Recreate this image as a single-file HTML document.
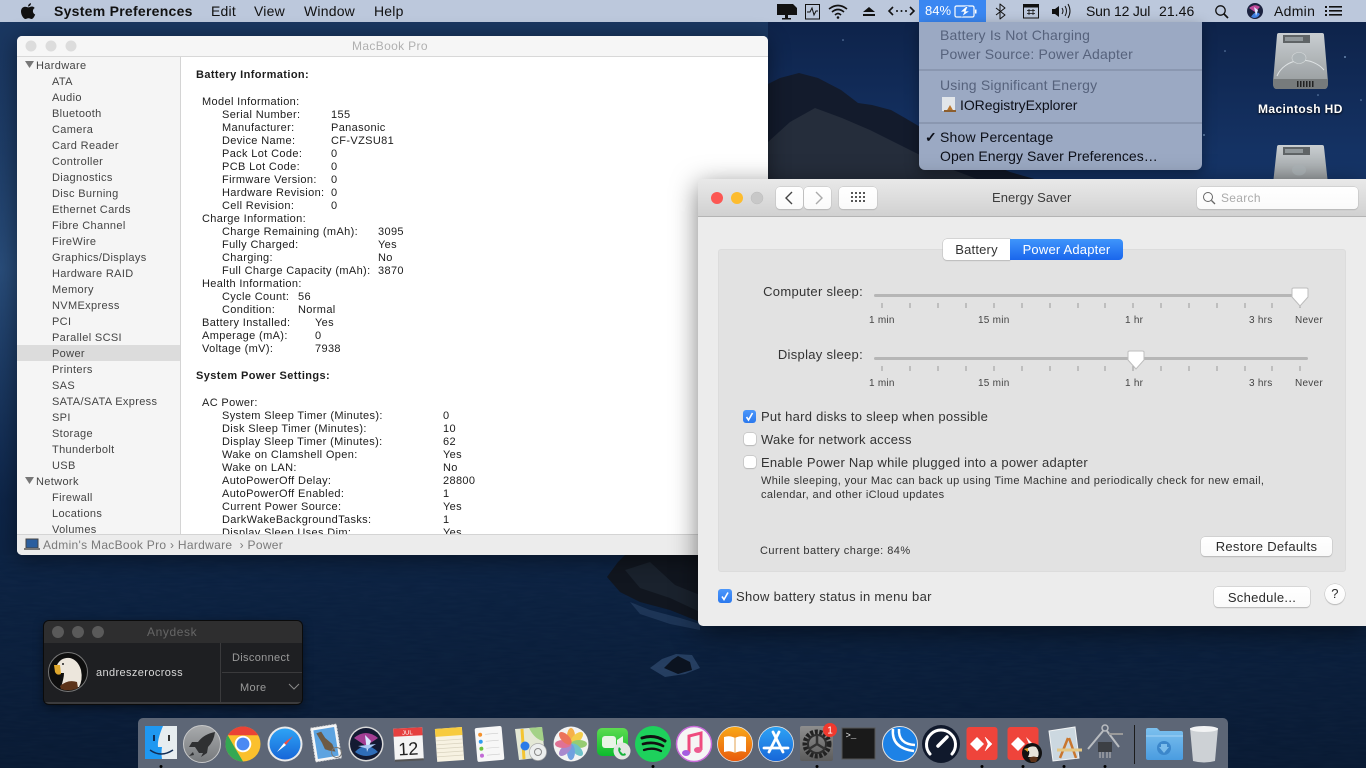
<!DOCTYPE html>
<html><head><meta charset="utf-8"><style>
html,body{margin:0;padding:0;width:1366px;height:768px;overflow:hidden;background:#0d2344}
body{font-family:"Liberation Sans",sans-serif;position:relative;color:#222}
.t{position:absolute;white-space:nowrap;line-height:14px;font-size:11px;letter-spacing:.3px}
.a{position:absolute}
svg{position:absolute;overflow:visible}
#wall{left:0;top:0}
#mb{left:0;top:0;width:1366px;height:22px;background:#bcc8dc}
#mb .t{font-size:14px;line-height:22px;top:0;color:#111;letter-spacing:.2px}
#mbp{left:17px;top:36px;width:751px;height:519px;background:#fff;border-radius:5px;overflow:hidden;box-shadow:0 4px 22px rgba(0,0,0,.45)}
#mbt{left:0;top:0;width:751px;height:20px;background:#f6f6f6;border-bottom:1px solid #d8d8d8}
#side{left:0;top:21px;width:163px;height:477px;background:#f5f5f5;border-right:1px solid #d4d4d4;overflow:hidden}
#side .t{color:#444;letter-spacing:.35px}
#info{left:164px;top:21px;width:587px;height:477px;overflow:hidden;background:#fff}
#info .t{color:#1c1c1c;letter-spacing:.36px}
#info b{letter-spacing:.4px}
#sb{left:0;top:498px;width:751px;height:21px;background:#ececec;border-top:1px solid #d4d4d4}
#es{left:698px;top:179px;width:668px;height:447px;background:#ececec;border-radius:5px 0 0 5px;overflow:hidden;box-shadow:0 6px 26px rgba(0,0,0,.5)}
#est{left:0;top:0;width:668px;height:37px;background:linear-gradient(#e9e9e9,#d1d1d1);border-bottom:1px solid #b4b4b4}
.btn{position:absolute;background:linear-gradient(#fff,#fafafa);border-radius:4px;box-shadow:0 0 0 .5px #c0c0c0,0 1px 1px #b0b0b0;text-align:center;font-size:13px;color:#2a2a2a;letter-spacing:.3px}
.cb{position:absolute;width:12px;height:12px;background:#fff;border-radius:3px;box-shadow:0 0 0 .5px #b4b4b4,0 1px 1px #bbb}
.cb.on{background:linear-gradient(#4c97fb,#2a78ee);box-shadow:none;width:13px;height:13px}
#es .l{font-size:13px;color:#333;letter-spacing:.26px}
#es .s{font-size:10px;color:#444;letter-spacing:.25px}
#menu{left:919px;top:22px;width:283px;height:148px;background:#9ba9c3;border-radius:0 0 6px 6px;box-shadow:0 4px 14px rgba(0,0,0,.35)}
#menu .t{font-size:14px;color:#0c0f18;letter-spacing:.2px}
#menu .g{color:#56627c}
#menu .sp{position:absolute;left:0;width:283px;height:2px;background:#8a97b0}
#ad{left:44px;top:621px;width:258px;height:83px;background:#1e1f22;border-radius:5px;box-shadow:0 0 0 1px #0b0b0b,0 3px 10px rgba(0,0,0,.5);overflow:hidden}
#dock{left:138px;top:718px;width:1090px;height:50px;background:#5d6676;border-radius:5px 5px 0 0}
</style></head><body>

<svg id="wall" width="1366" height="768" viewBox="0 0 1366 768">
<defs>
<linearGradient id="sea" x1="0" y1="0" x2="0" y2="1"><stop offset="0" stop-color="#1b3862"/><stop offset=".6" stop-color="#0f274b"/><stop offset=".8" stop-color="#0b203e"/><stop offset="1" stop-color="#091a33"/></linearGradient>
<linearGradient id="sky" x1="0" y1="0" x2="0" y2="1"><stop offset="0" stop-color="#0e234a"/><stop offset="1" stop-color="#16366a"/></linearGradient>
<radialGradient id="lft" cx="0" cy=".35" r=".3"><stop offset="0" stop-color="#3a6699" stop-opacity=".55"/><stop offset="1" stop-color="#2a5080" stop-opacity="0"/></radialGradient>
<filter id="n" x="0" y="0" width="100%" height="100%"><feTurbulence type="fractalNoise" baseFrequency=".05 .4" numOctaves="2" seed="4"/><feColorMatrix values="0 0 0 0 .2 0 0 0 0 .35 0 0 0 0 .55 0 0 0 .1 -.02"/></filter>
</defs>
<rect width="1366" height="768" fill="url(#sea)"/>
<rect width="1366" height="768" fill="url(#lft)"/>
<rect x="0" y="555" width="1366" height="213" filter="url(#n)" opacity=".45"/>
<rect x="768" y="22" width="598" height="160" fill="url(#sky)"/>
<path d="M768 84L780 78 799 73 818 78 841 90 858 103 872 105 891 110 905 118 922 128 960 150 1010 172 1045 182 768 182Z" fill="#131b2c"/>
<path d="M768 142L790 122 815 108 842 118 870 130 900 145 940 165 985 182 768 182Z" fill="#252d3b"/>
<g fill="#8fb0d8" opacity=".7"><circle cx="843" cy="40" r=".8"/><circle cx="1345" cy="57" r="1"/><circle cx="1225" cy="51" r=".8"/><circle cx="1318" cy="95" r=".8"/><circle cx="1361" cy="100" r=".8"/><circle cx="1204" cy="135" r="1"/></g>
<path d="M607 577L618 562 625 555 700 555 700 622 670 610 640 602 620 592Z" fill="#11161f"/>
<path d="M625 570L650 562 675 585 700 595 700 612 670 598 640 588Z" fill="#1a222d"/>
<path d="M630 602L650 610 680 618 700 624 700 630 670 624 640 614Z" fill="#2a4266" opacity=".6"/>
<path d="M650 668L662 659 676 654 692 655 700 668 685 674 665 677Z" fill="#345075" opacity=".65"/>
<path d="M664 668L672 660 678 656 690 662 692 670 678 674Z" fill="#0b1320"/>
</svg>

<!-- Macintosh HD icons -->
<svg width="60" height="60" style="left:1272px;top:32px" viewBox="0 0 60 60">
<defs><linearGradient id="hd" x1="0" y1="0" x2="0" y2="1"><stop offset="0" stop-color="#c9ced1"/><stop offset="1" stop-color="#94999b"/></linearGradient></defs>
<path d="M7 1H50Q52 1 52 3L56 50Q56 57 52 57H5Q1 57 1 50L5 3Q5 1 7 1Z" fill="url(#hd)"/>
<path d="M1 47H56V52Q56 57 52 57H5Q1 57 1 52Z" fill="#777b7c"/>
<rect x="11" y="3" width="27" height="8" fill="#5f6466"/><rect x="13" y="5" width="18" height="4" fill="#90979a"/>
<path d="M5 44A27 24 0 0 1 52 38" fill="none" stroke="#dfe3e5" stroke-width="1"/>
<ellipse cx="27" cy="26" rx="7" ry="5.500" fill="#adb4b7" stroke="#d6dadb" stroke-width=".6"/>
<g fill="#222"><rect x="25" y="49" width="1.500" height="6"/><rect x="28" y="49" width="1.500" height="6"/><rect x="31" y="49" width="1.500" height="6"/><rect x="34" y="49" width="1.500" height="6"/><rect x="37" y="49" width="1.500" height="6"/><rect x="40" y="49" width="1.500" height="6"/></g>
</svg>
<div class="t" style="left:1258px;top:102px;font-size:12px;font-weight:bold;color:#fff;text-shadow:0 1px 2px #000;letter-spacing:.4px">Macintosh HD</div>
<svg width="60" height="40" style="left:1272px;top:144px" viewBox="0 0 60 40">
<path d="M7 1H50Q52 1 52 3L56 40H1L5 3Q5 1 7 1Z" fill="url(#hd)"/>
<rect x="11" y="3" width="27" height="8" fill="#5f6466"/><rect x="13" y="5" width="18" height="4" fill="#90979a"/>
<ellipse cx="27" cy="26" rx="7" ry="5.500" fill="#adb4b7"/>
</svg>

<!-- Menu bar -->
<div class="a" id="mb">
<svg width="16" height="18" style="left:20px;top:2px" viewBox="0 0 16 18"><path d="M11 1Q11 4 8 4.600 8 2 11 1ZM8.300 5.400C9.500 5.400 10.400 4.500 12 4.500 13 4.500 14 5 14.700 6 12 7.500 12.500 11.500 15.200 12.500 14.500 14.500 13 17 11.500 17 10.500 17 10 16.300 8.500 16.300 7 16.300 6.500 17 5.500 17 3.500 17 1 12.800 1 9.500 1 6.500 3 4.800 5 4.800 6.300 4.800 7.300 5.400 8.300 5.400Z" fill="#111"/></svg>
<div class="t" style="left:54px;font-weight:bold;letter-spacing:.27px">System Preferences</div>
<div class="t" style="left:211px">Edit</div>
<div class="t" style="left:254px">View</div>
<div class="t" style="left:304px">Window</div>
<div class="t" style="left:374px">Help</div>

<div class="a" style="left:919px;top:0;width:67px;height:22px;background:#3a87f2"></div>
<svg width="290" height="22" style="left:770px;top:0" viewBox="0 0 290 22" fill="none" stroke="#111">
<path d="M7 4L23 4 27 8V15H7Z" fill="#111" stroke="none"/><rect x="15" y="15" width="3" height="3" fill="#111" stroke="none"/><rect x="12" y="18" width="9" height="1.500" fill="#111" stroke="none"/>
<rect x="35.500" y="4.500" width="14" height="14.500" stroke-width="1"/><path d="M37 12H40L42 8 44 15 46 11H48" stroke-width="1"/>
<path d="M59 9Q68 2 77 9M62 12Q68 7 74 12M65 15Q68 12 71 15" stroke-width="1.600"/><circle cx="68" cy="17.500" r="1.300" fill="#111" stroke="none"/>
<path d="M93 12L99 7 105 12ZM93 14H105V16H93Z" fill="#111" stroke="none"/>
<path d="M123 7L119 11 123 15M140 7L144 11 140 15" stroke-width="1.600"/><circle cx="127" cy="11" r="1" fill="#111" stroke="none"/><circle cx="131.500" cy="11" r="1" fill="#111" stroke="none"/><circle cx="136" cy="11" r="1" fill="#111" stroke="none"/>
<rect x="185" y="6" width="19" height="11" rx="1.500" stroke="#fff" stroke-width="1.200"/><rect x="205" y="9.500" width="1.500" height="4" fill="#fff" stroke="none"/><path d="M196 6.500L190 12H194L192 16.500 200 11H196L198 6.500Z" fill="#fff" stroke="#3a87f2" stroke-width=".7"/>
<path d="M226 8L235 15 230 19V4L235 8 226 15" stroke-width="1" stroke-linejoin="round"/>
<rect x="253.500" y="4.500" width="15" height="13.500" stroke-width="1"/><rect x="253.500" y="4.500" width="15" height="3" fill="#111" stroke="none"/>
<path d="M257 10.500h8M257 13.500h8M259 9v6M263 9v6" stroke-width=".8"/>
<path d="M282 9H285L289 6V17L285 14H282Z" fill="#111" stroke="none"/>
</svg>
<svg width="20" height="22" style="left:1058px;top:0" viewBox="0 0 20 22" fill="none" stroke="#111" stroke-width="1"><path d="M4 8Q6 11 4 14M7 6Q10 11 7 16M10 4Q14 11 10 18"/></svg>
<div class="t" style="left:925px;color:#fff;font-size:13px;letter-spacing:0">84%</div>
<div class="t" style="left:1086px;letter-spacing:-.2px">Sun 12 Jul</div>
<div class="t" style="left:1159px;letter-spacing:.05px">21.46</div>
<svg width="18" height="18" style="left:1213px;top:3px" viewBox="0 0 18 18" fill="none" stroke="#111" stroke-width="1.300"><circle cx="7.500" cy="7.500" r="4.700"/><path d="M11 11L15 15" stroke-width="1.700"/></svg>
<svg width="18" height="18" style="left:1246px;top:2px" viewBox="0 0 18 18"><circle cx="9" cy="9" r="8" fill="#1c2340"/><path d="M3 6Q9 1 14 5L9 10Z" fill="#c04a9a"/><path d="M5 15Q9 8 14 12 12 16 8 16Z" fill="#3e7fe0"/><path d="M8 5L10 14 12 8Z" fill="#dfe8ff"/></svg>
<div class="t" style="left:1274px;letter-spacing:.3px">Admin</div>
<svg width="18" height="12" style="left:1325px;top:5px" viewBox="0 0 18 12" fill="#111"><rect x="0" y="1" width="2" height="2"/><rect x="0" y="5" width="2" height="2"/><rect x="0" y="9" width="2" height="2"/><rect x="4" y="1" width="13" height="1.600"/><rect x="4" y="5" width="13" height="1.600"/><rect x="4" y="9" width="13" height="1.600"/></svg>
</div>

<!-- Battery menu -->
<div class="a" id="menu">
<div class="t g" style="left:21px;top:6px">Battery Is Not Charging</div>
<div class="t g" style="left:21px;top:25px">Power Source: Power Adapter</div>
<div class="sp" style="top:47px"></div>
<div class="t g" style="left:21px;top:56px">Using Significant Energy</div>
<svg width="16" height="16" style="left:22px;top:75px" viewBox="0 0 16 16"><rect x="1" y="0" width="13" height="14" fill="#e2e6ea"/><path d="M5 15L9 8 13 15Z" fill="#b9762e"/><rect x="3" y="13" width="12" height="2" fill="#8c5e2e"/></svg>
<div class="t" style="left:41px;top:76px;letter-spacing:-.05px">IORegistryExplorer</div>
<div class="sp" style="top:100px"></div>
<div class="t" style="left:6px;top:108px;font-size:14px;font-weight:bold">✓</div>
<div class="t" style="left:21px;top:108px">Show Percentage</div>
<div class="t" style="left:21px;top:127px;letter-spacing:.05px">Open Energy Saver Preferences…</div>
</div>

<!-- MacBook Pro window -->
<div class="a" id="mbp">
<div class="a" id="mbt">
<svg width="60" height="14" style="left:8px;top:3px"><circle cx="6" cy="7" r="5.500" fill="#dcdcdc"/><circle cx="26" cy="7" r="5.500" fill="#dcdcdc"/><circle cx="46" cy="7" r="5.500" fill="#dcdcdc"/></svg>
<div class="t" style="left:335px;top:3px;font-size:12px;color:#b0b0b0;letter-spacing:.35px">MacBook Pro</div>
</div>
<div class="a" id="side"><div class="a" style="left:0;top:1px;width:163px;height:480px">
<div class="a" style="left:0;top:287px;width:163px;height:16px;background:#dcdcdc"></div>
<svg width="10" height="10" style="left:8px;top:2px"><path d="M0 1H9L4.500 8Z" fill="#777"/></svg>
<div class="t" style="left:19px;top:1px">Hardware</div>
<div class="t" style="left:35px;top:17px">ATA</div>
<div class="t" style="left:35px;top:33px">Audio</div>
<div class="t" style="left:35px;top:49px">Bluetooth</div>
<div class="t" style="left:35px;top:65px">Camera</div>
<div class="t" style="left:35px;top:81px">Card Reader</div>
<div class="t" style="left:35px;top:97px">Controller</div>
<div class="t" style="left:35px;top:113px">Diagnostics</div>
<div class="t" style="left:35px;top:129px">Disc Burning</div>
<div class="t" style="left:35px;top:145px">Ethernet Cards</div>
<div class="t" style="left:35px;top:161px">Fibre Channel</div>
<div class="t" style="left:35px;top:177px">FireWire</div>
<div class="t" style="left:35px;top:193px">Graphics/Displays</div>
<div class="t" style="left:35px;top:209px">Hardware RAID</div>
<div class="t" style="left:35px;top:225px">Memory</div>
<div class="t" style="left:35px;top:241px">NVMExpress</div>
<div class="t" style="left:35px;top:257px">PCI</div>
<div class="t" style="left:35px;top:273px">Parallel SCSI</div>
<div class="t" style="left:35px;top:289px">Power</div>
<div class="t" style="left:35px;top:305px">Printers</div>
<div class="t" style="left:35px;top:321px">SAS</div>
<div class="t" style="left:35px;top:337px">SATA/SATA Express</div>
<div class="t" style="left:35px;top:353px">SPI</div>
<div class="t" style="left:35px;top:369px">Storage</div>
<div class="t" style="left:35px;top:385px">Thunderbolt</div>
<div class="t" style="left:35px;top:401px">USB</div>
<svg width="10" height="10" style="left:8px;top:418px"><path d="M0 1H9L4.500 8Z" fill="#777"/></svg>
<div class="t" style="left:19px;top:417px">Network</div>
<div class="t" style="left:35px;top:433px">Firewall</div>
<div class="t" style="left:35px;top:449px">Locations</div>
<div class="t" style="left:35px;top:465px">Volumes</div>
</div></div>
<div class="a" id="info"><div class="a" style="left:0;top:15px;width:587px;height:470px">
<div class="t" style="left:15px;top:-4px"><b>Battery Information:</b></div>
<div class="t" style="left:21px;top:23px">Model Information:</div>
<div class="t" style="left:41px;top:36px">Serial Number:</div><div class="t" style="left:150px;top:36px">155</div>
<div class="t" style="left:41px;top:49px">Manufacturer:</div><div class="t" style="left:150px;top:49px">Panasonic</div>
<div class="t" style="left:41px;top:62px">Device Name:</div><div class="t" style="left:150px;top:62px">CF-VZSU81</div>
<div class="t" style="left:41px;top:75px">Pack Lot Code:</div><div class="t" style="left:150px;top:75px">0</div>
<div class="t" style="left:41px;top:88px">PCB Lot Code:</div><div class="t" style="left:150px;top:88px">0</div>
<div class="t" style="left:41px;top:101px">Firmware Version:</div><div class="t" style="left:150px;top:101px">0</div>
<div class="t" style="left:41px;top:114px">Hardware Revision:</div><div class="t" style="left:150px;top:114px">0</div>
<div class="t" style="left:41px;top:127px">Cell Revision:</div><div class="t" style="left:150px;top:127px">0</div>
<div class="t" style="left:21px;top:140px">Charge Information:</div>
<div class="t" style="left:41px;top:153px">Charge Remaining (mAh):</div><div class="t" style="left:197px;top:153px">3095</div>
<div class="t" style="left:41px;top:166px">Fully Charged:</div><div class="t" style="left:197px;top:166px">Yes</div>
<div class="t" style="left:41px;top:179px">Charging:</div><div class="t" style="left:197px;top:179px">No</div>
<div class="t" style="left:41px;top:192px">Full Charge Capacity (mAh):</div><div class="t" style="left:197px;top:192px">3870</div>
<div class="t" style="left:21px;top:205px">Health Information:</div>
<div class="t" style="left:41px;top:218px">Cycle Count:</div><div class="t" style="left:117px;top:218px">56</div>
<div class="t" style="left:41px;top:231px">Condition:</div><div class="t" style="left:117px;top:231px">Normal</div>
<div class="t" style="left:21px;top:244px">Battery Installed:</div><div class="t" style="left:134px;top:244px">Yes</div>
<div class="t" style="left:21px;top:257px">Amperage (mA):</div><div class="t" style="left:134px;top:257px">0</div>
<div class="t" style="left:21px;top:270px">Voltage (mV):</div><div class="t" style="left:134px;top:270px">7938</div>
<div class="t" style="left:15px;top:297px"><b>System Power Settings:</b></div>
<div class="t" style="left:21px;top:324px">AC Power:</div>
<div class="t" style="left:41px;top:337px">System Sleep Timer (Minutes):</div><div class="t" style="left:262px;top:337px">0</div>
<div class="t" style="left:41px;top:350px">Disk Sleep Timer (Minutes):</div><div class="t" style="left:262px;top:350px">10</div>
<div class="t" style="left:41px;top:363px">Display Sleep Timer (Minutes):</div><div class="t" style="left:262px;top:363px">62</div>
<div class="t" style="left:41px;top:376px">Wake on Clamshell Open:</div><div class="t" style="left:262px;top:376px">Yes</div>
<div class="t" style="left:41px;top:389px">Wake on LAN:</div><div class="t" style="left:262px;top:389px">No</div>
<div class="t" style="left:41px;top:402px">AutoPowerOff Delay:</div><div class="t" style="left:262px;top:402px">28800</div>
<div class="t" style="left:41px;top:415px">AutoPowerOff Enabled:</div><div class="t" style="left:262px;top:415px">1</div>
<div class="t" style="left:41px;top:428px">Current Power Source:</div><div class="t" style="left:262px;top:428px">Yes</div>
<div class="t" style="left:41px;top:441px">DarkWakeBackgroundTasks:</div><div class="t" style="left:262px;top:441px">1</div>
<div class="t" style="left:41px;top:454px">Display Sleep Uses Dim:</div><div class="t" style="left:262px;top:454px">Yes</div>
</div></div>
<div class="a" id="sb">
<svg width="16" height="14" style="left:7px;top:3px" viewBox="0 0 16 14"><rect x="2" y="1" width="12" height="9" fill="#2b5e9e" stroke="#444" stroke-width="1"/><rect x="0" y="10" width="16" height="2" fill="#777"/></svg>
<div class="t" style="left:26px;top:3px;font-size:12px;color:#7a7a7a;letter-spacing:.3px">Admin's MacBook Pro › Hardware&nbsp; › Power</div>
</div>
</div>

<!-- Energy Saver -->
<div class="a" id="es">
<div class="a" id="est">
<svg width="70" height="16" style="left:12px;top:11px"><circle cx="7" cy="8" r="6" fill="#fc5753"/><circle cx="27" cy="8" r="6" fill="#fdbc2e"/><circle cx="47" cy="8" r="6" fill="#c8c8c8" stroke="#bbb" stroke-width=".5"/></svg>
<div class="btn" style="left:78px;top:8px;width:27px;height:22px"></div>
<div class="btn" style="left:106px;top:8px;width:27px;height:22px"></div>
<svg width="60" height="22" style="left:78px;top:8px" fill="none"><path d="M16 5L10 11 16 17" stroke="#444" stroke-width="1.400"/><path d="M40 5L46 11 40 17" stroke="#aaa" stroke-width="1.400"/></svg>
<div class="btn" style="left:141px;top:8px;width:38px;height:22px"></div>
<svg width="14" height="12" style="left:153px;top:13px" fill="#555"><rect x="0" y="0" width="2" height="2"/><rect x="4" y="0" width="2" height="2"/><rect x="8" y="0" width="2" height="2"/><rect x="12" y="0" width="2" height="2"/><rect x="0" y="4" width="2" height="2"/><rect x="4" y="4" width="2" height="2"/><rect x="8" y="4" width="2" height="2"/><rect x="12" y="4" width="2" height="2"/><rect x="0" y="8" width="2" height="2"/><rect x="4" y="8" width="2" height="2"/><rect x="8" y="8" width="2" height="2"/><rect x="12" y="8" width="2" height="2"/></svg>
<div class="t" style="left:294px;top:12px;font-size:13px;color:#3c3c3c;letter-spacing:.05px">Energy Saver</div>
<div class="btn" style="left:499px;top:8px;width:161px;height:22px"></div>
<svg width="14" height="14" style="left:504px;top:12px" fill="none" stroke="#666"><circle cx="6" cy="6" r="4.500"/><path d="M9.500 9.500L13 13" stroke-width="1.300"/></svg>
<div class="t" style="left:523px;top:12px;font-size:12px;color:#aaa;letter-spacing:.3px">Search</div>
</div>
<div class="a" style="left:20px;top:70px;width:626px;height:321px;background:#e2e2e2;border:1px solid #dcdcdc;border-radius:3px"></div>
<div class="a" style="left:245px;top:60px;width:67px;height:21px;background:#fff;border-radius:4px 0 0 4px;box-shadow:0 0 0 .5px #bbb,0 1px 1px #bbb;text-align:center;line-height:21px;font-size:13px;color:#333;letter-spacing:.2px">Battery</div>
<div class="a" style="left:312px;top:60px;width:113px;height:21px;background:linear-gradient(#3f95fb,#1a66ec);border-radius:0 4px 4px 0;text-align:center;line-height:21px;font-size:13px;color:#fff;letter-spacing:.2px">Power Adapter</div>

<div class="t l" style="right:503px;top:106px;letter-spacing:.3px">Computer sleep:</div>
<div class="a" style="left:176px;top:115px;width:434px;height:3px;background:#b6b6b6;border-radius:2px"></div>
<div class="t l" style="right:503px;top:169px;letter-spacing:.3px">Display sleep:</div>
<div class="a" style="left:176px;top:178px;width:434px;height:3px;background:#b6b6b6;border-radius:2px"></div>
<svg width="668" height="220" style="left:0;top:100px" fill="none" stroke="#9a9a9a" stroke-width="1">
<path d="M184 24v5M212 24v5M240 24v5M268 24v5M296 24v5M324 24v5M352 24v5M380 24v5M407 24v5M435 24v5M463 24v5M491 24v5M519 24v5M547 24v5M574 24v5M602 24v5"/>
<path d="M184 87v5M212 87v5M240 87v5M268 87v5M296 87v5M324 87v5M352 87v5M380 87v5M407 87v5M435 87v5M463 87v5M491 87v5M519 87v5M547 87v5M574 87v5M602 87v5"/>
<path d="M594 10Q594 9 596 9H608Q610 9 610 10V18L602 27 594 18Z" fill="#fff" stroke="#bdbdbd"/>
<path d="M430 73Q430 72 432 72H444Q446 72 446 73V81L438 90 430 81Z" fill="#fff" stroke="#bdbdbd"/>
</svg>
<div class="t s" style="left:171px;top:135px">1 min</div>
<div class="t s" style="left:280px;top:135px">15 min</div>
<div class="t s" style="left:427px;top:135px">1 hr</div>
<div class="t s" style="left:551px;top:135px">3 hrs</div>
<div class="t s" style="left:597px;top:135px">Never</div>
<div class="t s" style="left:171px;top:198px">1 min</div>
<div class="t s" style="left:280px;top:198px">15 min</div>
<div class="t s" style="left:427px;top:198px">1 hr</div>
<div class="t s" style="left:551px;top:198px">3 hrs</div>
<div class="t s" style="left:597px;top:198px">Never</div>

<div class="cb on" style="left:45px;top:231px"></div>
<svg width="13" height="13" style="left:45px;top:231px" fill="none" stroke="#fff" stroke-width="1.600"><path d="M3.500 7L5.500 10 9.500 3"/></svg>
<div class="t l" style="left:63px;top:231px">Put hard disks to sleep when possible</div>
<div class="cb" style="left:46px;top:254px"></div>
<div class="t l" style="left:63px;top:254px">Wake for network access</div>
<div class="cb" style="left:46px;top:277px"></div>
<div class="t l" style="left:63px;top:277px">Enable Power Nap while plugged into a power adapter</div>
<div class="t" style="left:63px;top:295px;color:#333;letter-spacing:.37px;font-size:11px">While sleeping, your Mac can back up using Time Machine and periodically check for new email,</div>
<div class="t" style="left:63px;top:309px;color:#333;letter-spacing:.38px;font-size:11px">calendar, and other iCloud updates</div>
<div class="t" style="left:62px;top:365px;color:#333;letter-spacing:.46px">Current battery charge: 84%</div>
<div class="btn" style="left:503px;top:358px;width:131px;height:19px;line-height:19px">Restore Defaults</div>
<div class="cb on" style="left:20px;top:410px;width:14px;height:14px"></div>
<svg width="14" height="14" style="left:20px;top:410px" fill="none" stroke="#fff" stroke-width="1.600"><path d="M4 7.500L6 10.500 10 3.500"/></svg>
<div class="t l" style="left:38px;top:411px;letter-spacing:.3px">Show battery status in menu bar</div>
<div class="btn" style="left:516px;top:408px;width:96px;height:20px;line-height:21px">Schedule...</div>
<div class="btn" style="left:627px;top:405px;width:20px;height:20px;line-height:20px;border-radius:50%">?</div>
</div>

<!-- Anydesk -->
<div class="a" id="ad">
<div class="a" style="left:0;top:0;width:258px;height:22px;background:#2e2e2f"></div>
<svg width="70" height="22" style="left:0;top:0" fill="#5a5a5a"><circle cx="14" cy="11" r="6"/><circle cx="34" cy="11" r="6"/><circle cx="54" cy="11" r="6"/></svg>
<div class="t" style="left:103px;top:4px;font-size:12px;color:#666;letter-spacing:.6px">Anydesk</div>
<svg width="40" height="40" style="left:4px;top:31px" viewBox="0 0 40 40"><circle cx="20" cy="20" r="19.500" fill="#0e0e0e" stroke="#777" stroke-width="1"/><path d="M9 13Q13 5 22 6 30 8 33 18 35 28 31 35L13 35Q16 26 16 21L11 21Z" fill="#ece6dc"/><path d="M6 13H12L13 22Q9 24 7 20Z" fill="#dfa72c"/><path d="M12 34Q20 27 29 30L30 36Q21 40 13 37Z" fill="#5c3319"/><circle cx="15" cy="12" r="1" fill="#222"/></svg>
<div class="t" style="left:52px;top:45px;color:#d8d8d8;letter-spacing:.38px">andreszerocross</div>
<div class="a" style="left:176px;top:22px;width:1px;height:61px;background:#3a3a3c"></div>
<div class="a" style="left:178px;top:51px;width:80px;height:1px;background:#3a3a3c"></div>
<div class="t" style="left:188px;top:30px;color:#9a9a9a;letter-spacing:.33px">Disconnect</div>
<div class="t" style="left:196px;top:60px;color:#9a9a9a;letter-spacing:.35px">More</div>
<svg width="12" height="8" style="left:244px;top:62px" fill="none" stroke="#8a8a8a" stroke-width="1"><path d="M1 1L6 6 11 1"/></svg>
<div class="a" style="left:0;bottom:0;width:258px;height:2px;background:#3b3b3d"></div>
</div>

<!-- Dock -->
<div class="a" id="dock"></div>
<svg width="1366" height="768" style="left:0;top:0" viewBox="0 0 1366 768">
<defs>
<linearGradient id="rk" x1="0" y1="0" x2="0" y2="1"><stop offset="0" stop-color="#a9abad"/><stop offset="1" stop-color="#76797c"/></linearGradient>
<linearGradient id="sf" x1="0" y1="0" x2="0" y2="1"><stop offset="0" stop-color="#2ea3f5"/><stop offset="1" stop-color="#1766d8"/></linearGradient>
<linearGradient id="bk" x1="0" y1="0" x2="0" y2="1"><stop offset="0" stop-color="#f9a818"/><stop offset="1" stop-color="#e85a0c"/></linearGradient>
<linearGradient id="ft" x1="0" y1="0" x2="0" y2="1"><stop offset="0" stop-color="#5cdc50"/><stop offset="1" stop-color="#0dbb2e"/></linearGradient>
<linearGradient id="gr" x1="0" y1="0" x2="0" y2="1"><stop offset="0" stop-color="#8e8e8e"/><stop offset="1" stop-color="#5c5c5c"/></linearGradient>
<linearGradient id="fd" x1="0" y1="0" x2="0" y2="1"><stop offset="0" stop-color="#7cc0ee"/><stop offset="1" stop-color="#4a9ce0"/></linearGradient>
</defs>
<!-- Finder -->
<g transform="translate(161,744)"><rect x="-16" y="-18" width="32" height="33" fill="#e7edf0"/><path d="M-16-18H2Q-4-4-3 3L1 3Q0 9 1 15H-16Z" fill="#1f98f1"/><rect x="-8" y="-9" width="2" height="6" fill="#102c55"/><rect x="7" y="-9" width="2" height="6" fill="#333"/><path d="M-11 6Q0 14 12 6" fill="none" stroke="#102c55" stroke-width="1.500"/></g>
<rect x="159.500" y="765" width="3" height="3" rx="1.500" fill="#000"/>
<!-- Launchpad -->
<g transform="translate(202,744)"><circle r="18.500" fill="url(#rk)" stroke="#c7c8c9" stroke-width="1"/><path d="M13-12Q2-10-4-2L-10-2-13 3-7 3-3 9 1 9-1 13 5 9 6 3Q12-3 13-12Z" fill="#2f3032"/><path d="M-9 8L-13 12-8 11Z" fill="#2f3032"/></g>
<!-- Chrome -->
<g transform="translate(243,744)"><circle r="17.500" fill="#fbc02d"/><path d="M-15.200-8.700A17.500 17.500 0 0 1 15.200-8.700L0-8.700Z" fill="#ea4335"/><path d="M-15.200-8.700L-8 4 0 17.500A17.500 17.500 0 0 1-15.200-8.700Z" fill="#34a853"/><circle r="8.300" fill="#fff"/><circle r="6.400" fill="#4a89f3"/></g>
<!-- Safari -->
<g transform="translate(285,744)"><circle r="17.500" fill="#eaeaea"/><circle r="15.500" fill="url(#sf)"/><path d="M8-8L-1-1 1 1Z" fill="#f24f42"/><path d="M-8 8L-1-1 1 1Z" fill="#fff"/></g>
<!-- Mail -->
<g transform="translate(326,743) rotate(-9)"><rect x="-13" y="-17" width="26" height="34" fill="#f6f6f6" stroke="#ddd" stroke-dasharray="2 1"/><rect x="-10.500" y="-14.500" width="21" height="29" fill="#5da3e0"/><path d="M-8-11L-3-12 0-5 6 2 8 10 2 8-2 6-4-1Z" fill="#6d5a44"/><circle cx="9" cy="11" r="5" fill="none" stroke="#777"/></g>
<!-- Siri -->
<g transform="translate(366,744)"><circle r="17.500" fill="#d9d9d9"/><circle r="16" fill="#131a32"/><path d="M-12-6Q0-16 12-6L0 2Z" fill="#a23d93"/><path d="M-11 8Q0-4 12 8 0 16-11 8Z" fill="#2f6db8"/><path d="M-1-9L1 8 5-3Z" fill="#d9e8ff"/><path d="M-8 2L10 0 2 5Z" fill="#a9c9f4"/></g>
<!-- Calendar -->
<g transform="translate(408,744) rotate(-3)"><rect x="-14" y="-16" width="29" height="32" fill="#f4f4f4"/><rect x="-14" y="-16" width="29" height="8" fill="#e6403f"/><rect x="-14" y="15" width="29" height="2" fill="#555"/><text x="0" y="-9.500" font-size="6" fill="#fff" text-anchor="middle" font-family="Liberation Sans">JUL</text><text x="0" y="11" font-size="18" fill="#222" text-anchor="middle" font-family="Liberation Sans">12</text></g>
<!-- Notes -->
<g transform="translate(449,744) rotate(-4)"><rect x="-13" y="-16" width="27" height="33" fill="#f7f2e2"/><rect x="-13" y="-16" width="27" height="8" fill="#f7cb3e"/><path d="M-13-4H14M-13 0H14M-13 4H14M-13 8H14M-13 12H14" stroke="#d9d3bf" stroke-width=".7"/></g>
<!-- Reminders -->
<g transform="translate(489,744) rotate(-5)"><rect x="-13" y="-17" width="27" height="34" rx="2" fill="#f7f7f7"/><circle cx="-8" cy="-10" r="2" fill="#f4902b"/><circle cx="-8" cy="-3" r="2" fill="#2d9cf1"/><circle cx="-8" cy="4" r="2" fill="#6dc13f"/><circle cx="-8" cy="11" r="2" fill="#c26bd6"/><path d="M-3-10H10M-3-3H10M-3 4H10M-3 11H10" stroke="#ccc" stroke-width=".6"/></g>
<!-- Maps -->
<g transform="translate(530,744)"><path d="M-15-15L12-17 15 13-11 16Z" fill="#e4e8d6"/><path d="M-1-16L12-17 14-3Q5-4-1-16Z" fill="#a4d288"/><path d="M-8-15L-6 15" stroke="#f4c531" stroke-width="3"/><circle cx="-5" cy="2" r="4.500" fill="#2a7ce8"/><circle cx="8" cy="8" r="8.500" fill="#eceeee" stroke="#aaa" stroke-width=".7"/><circle cx="8" cy="8" r="3.500" fill="none" stroke="#888"/></g>
<!-- Photos -->
<g transform="translate(571,744)"><circle r="17.500" fill="#f2f2f2"/>
<g opacity=".85"><ellipse cy="-8" rx="4" ry="8" fill="#f7a52b"/><ellipse cy="-8" rx="4" ry="8" fill="#f4c72c" transform="rotate(45)"/><ellipse cy="-8" rx="4" ry="8" fill="#86c65c" transform="rotate(90)"/><ellipse cy="-8" rx="4" ry="8" fill="#58b9c1" transform="rotate(135)"/><ellipse cy="-8" rx="4" ry="8" fill="#5a92dc" transform="rotate(180)"/><ellipse cy="-8" rx="4" ry="8" fill="#9c76c7" transform="rotate(225)"/><ellipse cy="-8" rx="4" ry="8" fill="#dd5b85" transform="rotate(270)"/><ellipse cy="-8" rx="4" ry="8" fill="#ec5e41" transform="rotate(315)"/></g></g>
<!-- FaceTime -->
<g transform="translate(612,744)"><rect x="-15" y="-16" width="31" height="28" rx="5" fill="url(#ft)"/><rect x="-10" y="-8" width="14" height="12" rx="3" fill="#e9f4e6"/><path d="M5-4L11-8V4L5 0Z" fill="#e9f4e6"/><circle cx="10" cy="7" r="8.500" fill="#e3e6e3"/><path d="M7 3L9 5 8 7 11 10 13 9 14 11Q10 13 8 10 5 6 7 3Z" fill="#14b33b"/></g>
<!-- Spotify -->
<g transform="translate(653,744)"><circle r="18" fill="#1ed15c"/><path d="M-11-6Q1-10 12-3" fill="none" stroke="#111" stroke-width="3" stroke-linecap="round"/><path d="M-10 0Q1-3 10 2" fill="none" stroke="#111" stroke-width="2.700" stroke-linecap="round"/><path d="M-9 6Q0 3 8 7" fill="none" stroke="#111" stroke-width="2.300" stroke-linecap="round"/></g>
<rect x="651.500" y="765" width="3" height="3" rx="1.500" fill="#000"/>
<!-- iTunes -->
<g transform="translate(694,744)"><circle r="17.500" fill="#f5f5f5" stroke="#c86bd8" stroke-width="1.500"/><path d="M-5 9V-8L7-11V6" fill="none" stroke="#ef4a7e" stroke-width="3"/><ellipse cx="-8" cy="9" rx="4" ry="3" fill="#a65ce0"/><ellipse cx="4" cy="6" rx="4" ry="3" fill="#ed5a8f"/></g>
<!-- Books -->
<g transform="translate(735,744)"><circle r="17.500" fill="url(#bk)" stroke="#e8e8e8" stroke-width=".8"/><path d="M-11-7Q-5-9 0-6 5-9 11-7V8Q5 6 0 9-5 6-11 8Z" fill="#fff"/><path d="M0-6V9" stroke="#e3a24f"/></g>
<!-- App Store -->
<g transform="translate(776,744)"><circle r="17.500" fill="url(#sf)" stroke="#e8e8e8" stroke-width=".8"/><path d="M-3-12L7 8M3-12L-7 8M-12 4H12" stroke="#fff" stroke-width="2.800" stroke-linecap="round" fill="none"/></g>
<!-- Prefs -->
<g transform="translate(817,744)"><rect x="-17" y="-18" width="33" height="35" rx="2" fill="url(#gr)"/><circle r="12" fill="none" stroke="#222" stroke-width="5" stroke-dasharray="3 1.500"/><circle r="9" fill="none" stroke="#2e2e2e" stroke-width="2"/><path d="M0 0L0-9M0 0L8 5M0 0L-8 5" stroke="#333" stroke-width="2.500"/><circle cx="13" cy="-14" r="7" fill="#f0392e"/><text x="13" y="-10.500" font-size="10" fill="#fff" text-anchor="middle" font-family="Liberation Sans">1</text></g>
<rect x="815.500" y="765" width="3" height="3" rx="1.500" fill="#000"/>
<!-- Terminal -->
<g transform="translate(858.500,744)"><rect x="-16.500" y="-16" width="33" height="31" fill="#1a1a1a" stroke="#555" stroke-width="1"/><text x="-13" y="-6" font-size="9" fill="#eee" font-family="Liberation Mono">&gt;_</text></g>
<!-- WinBox -->
<g transform="translate(900,744)"><circle r="17.500" fill="#1d82e6" stroke="#e4e4e4" stroke-width="1"/><path d="M-7-15Q-9 4 14 7M-1-15Q-2 0 15 1" fill="none" stroke="#fff" stroke-width="2.500"/></g>
<!-- Speedtest -->
<g transform="translate(941,744)"><circle r="19" fill="#10192c"/><path d="M-11 10A14.500 14.500 0 1 1 11 10" fill="none" stroke="#fff" stroke-width="3" stroke-linecap="round"/><path d="M-3 2L6-7" stroke="#fff" stroke-width="3.500" stroke-linecap="round"/></g>
<!-- AnyDesk -->
<g transform="translate(982,744)"><rect x="-15.500" y="-17" width="31" height="33" rx="3" fill="#ef443b"/><path d="M-5-7L2 0-5 7-12 0Z" fill="#fff"/><path d="M3-7L10 0 3 7 6 0Z" fill="#fff" stroke="#fff" stroke-width=".5"/></g>
<rect x="980.500" y="765" width="3" height="3" rx="1.500" fill="#000"/>
<g transform="translate(1023,744)"><rect x="-15.500" y="-17" width="31" height="33" rx="3" fill="#ef443b"/><path d="M-5-7L2 0-5 7-12 0Z" fill="#fff"/><path d="M3-7L10 0 3 7 6 0Z" fill="#fff"/><circle cx="9" cy="9" r="10" fill="#111"/><path d="M3 6Q7 1 13 3 17 8 15 13L5 13Q7 9 6 7Z" fill="#e8e4da"/><path d="M1 5L5 4 5 8Z" fill="#d9a42c"/><path d="M6 14Q11 11 15 14L13 18H8Z" fill="#5c3319"/></g>
<rect x="1021.500" y="765" width="3" height="3" rx="1.500" fill="#000"/>
<!-- Xcode-like -->
<g transform="translate(1064,744)"><path d="M-15-13L11-17 15 14-11 17Z" fill="#ccd8e0" stroke="#f1f3f4" stroke-width="1"/><path d="M4-6L-4 14M5-6L12 14" stroke="#c9762e" stroke-width="2.500"/><path d="M-7 6H18" stroke="#e4c683" stroke-width="3"/></g>
<rect x="1062.500" y="765" width="3" height="3" rx="1.500" fill="#000"/>
<!-- IORegistry -->
<g transform="translate(1105,744)"><circle cy="-16" r="3" fill="none" stroke="#b9bcc0" stroke-width="1.500"/><path d="M-2-13L-17 5M2-13L14 3" fill="none" stroke="#b9bcc0" stroke-width="2"/><path d="M4-10H18" stroke="#999" stroke-width="2"/><rect x="-7" y="-2" width="14" height="10" fill="#3c3f44"/><path d="M-5 8v6M-2 8v6M2 8v6M5 8v6" stroke="#9ea1a5" stroke-width="1.500"/></g>
<rect x="1103.500" y="765" width="3" height="3" rx="1.500" fill="#000"/>
<rect x="1134" y="725" width="1" height="39" fill="#1c1c1c"/>
<!-- Folder -->
<g transform="translate(1164,744)"><path d="M-18-14Q-18-16-16-16H-7L-4-13H17Q19-13 19-11V14Q19 16 17 16H-16Q-18 16-18 14Z" fill="url(#fd)"/><path d="M-18-8H19" stroke="#a5d4f5" stroke-width="1"/><circle cy="4" r="7" fill="#3c87cb"/><path d="M-3 0H3V3H5L0 9-5 3H-3Z" fill="#7cbdec"/></g>
<!-- Trash -->
<g transform="translate(1204,744)"><path d="M-14-16H14L11 17Q0 20-11 17Z" fill="#dde0e2" opacity=".88"/><ellipse cy="-15" rx="14" ry="3" fill="#f2f3f4"/></g>
</svg>
</body></html>
